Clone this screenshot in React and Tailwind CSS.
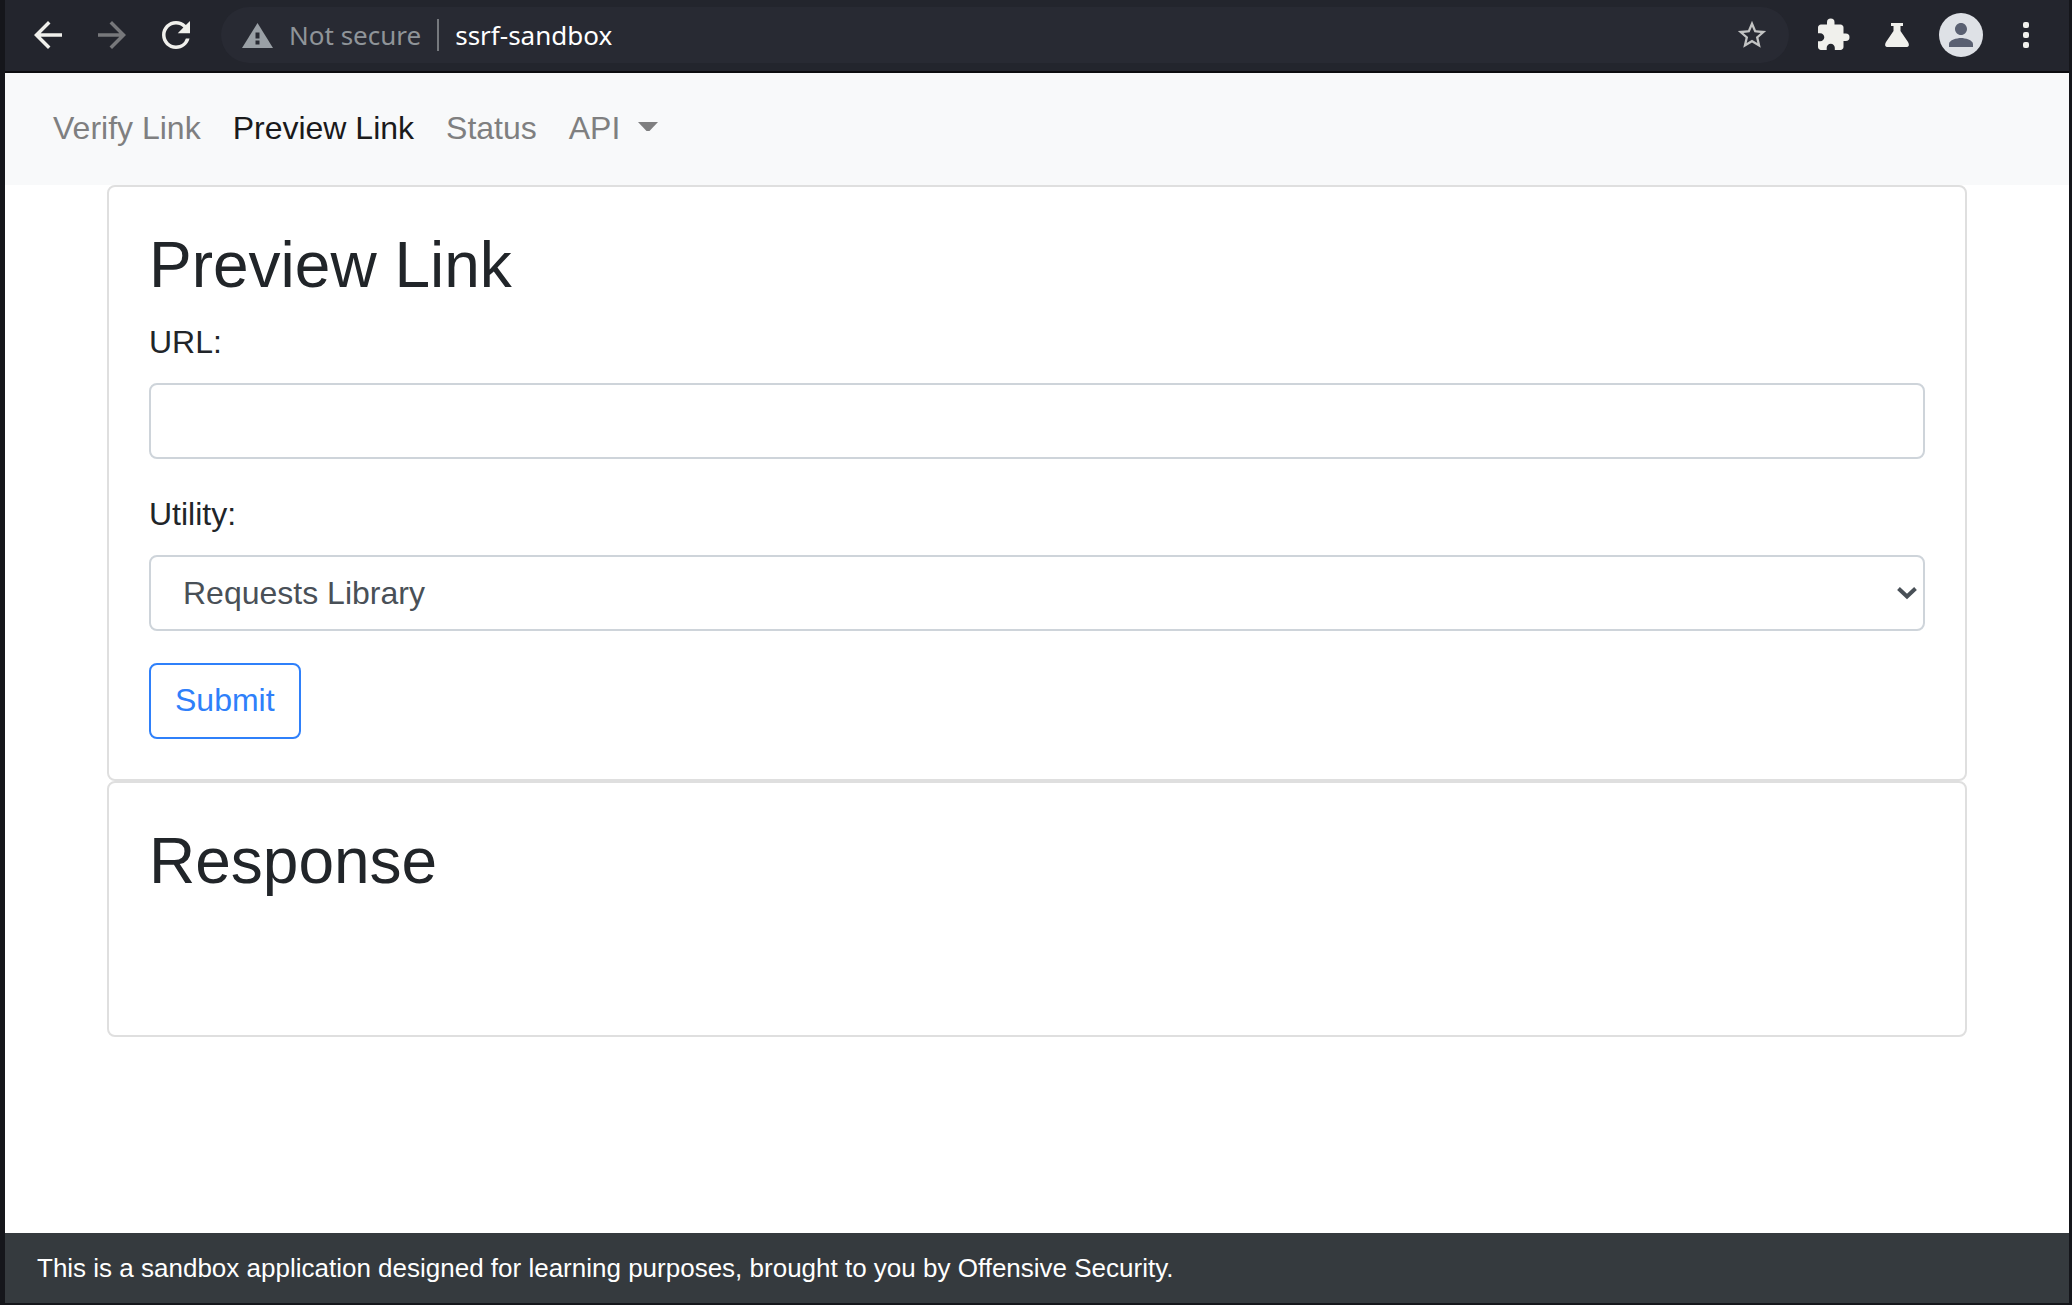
import React from 'react'
import { MdArrowBack, MdArrowForward, MdRefresh, MdStarBorder, MdExtension, MdPerson } from 'react-icons/md'
import { clsx } from 'clsx'

const links = [
  { label: 'Verify Link' },
  { label: 'Preview Link', active: true },
  { label: 'Status' },
]

const WarningIcon = () => (
  <svg width="31" height="25" viewBox="0 0 31 25">
    <path d="M15.5 0L31 25H0z" fill="#9aa0a6" />
    <path d="M13.5 9.5h4v6h-4zM13.5 17.5h4v4h-4z" fill="#282a33" />
  </svg>
)

const FlaskIcon = () => (
  <svg width="24" height="24" viewBox="0 0 24 24" fill="currentColor">
    <path d="M6 0h12v3h-2.500v5L23 19c1.500 2.500 1 5-1 5H2c-2 0-2.500-2.500-1-5L8.500 8V3H6z" />
  </svg>
)

const DotsIcon = () => (
  <svg width="6" height="26" viewBox="0 0 6 26" fill="currentColor">
    <rect width="6" height="6" rx="2" />
    <rect y="10" width="6" height="6" rx="2" />
    <rect y="20" width="6" height="6" rx="2" />
  </svg>
)

const Toolbar = () => (
  <header className="flex items-center h-[73px] pl-[22px] pr-10 pb-px bg-[#23252d] border-b-2 border-[#0c0c0f] text-[#f0f0ec] font-['Noto_Sans',sans-serif] text-[26px]">
    <div className="flex gap-[22px]">
      <button aria-label="Back"><MdArrowBack size={42} /></button>
      <button aria-label="Forward" className="text-[#77787b]"><MdArrowForward size={42} /></button>
      <button aria-label="Reload"><MdRefresh size={42} /></button>
    </div>

    <div className="flex flex-1 items-center h-14 ml-6 pl-[21px] pr-5 rounded-full bg-[#282a33]">
      <WarningIcon />
      <span className="ml-4 text-[#8f9499]">Not secure</span>
      <span className="w-0.5 h-8 ml-4 mr-4 bg-[#76797e]" />
      <input aria-label="Address" defaultValue="ssrf-sandbox" className="flex-1 min-w-0 bg-transparent text-white outline-none" />
      <button aria-label="Bookmark" className="text-[#c3c4c4]"><MdStarBorder size={34} /></button>
    </div>

    <div className="flex items-center ml-[26px]">
      <button aria-label="Extensions"><MdExtension size={36} /></button>
      <button aria-label="Labs" className="ml-[34px]"><FlaskIcon /></button>
      <button aria-label="Profile" className="flex items-center justify-center size-11 ml-[30px] rounded-full bg-[#dee1e6] text-[#5a6072]">
        <MdPerson size={36} />
      </button>
      <button aria-label="Menu" className="ml-10"><DotsIcon /></button>
    </div>
  </header>
)

const NavBar = () => (
  <nav className="flex items-center h-28 px-12 pb-0.5 gap-8 bg-[#f8f9fa]">
    {links.map(({ label, active }) => (
      <a key={label} href="#" className={clsx(active ? 'text-[#1a1a1b]' : 'text-[#7f7f80]')}>{label}</a>
    ))}
    <a href="#" className="flex items-center text-[#7f7f80]">
      API
      <svg width="20" height="9" viewBox="0 0 20 9" className="ml-[18px] mb-1" fill="currentColor">
        <path d="M0 0h20L11.500 9h-3z" />
      </svg>
    </a>
  </nav>
)

const Card = ({ title, className, children }) => (
  <section className={clsx('p-10 border-2 border-[#dfdfdf] rounded-lg bg-white', className)}>
    <h1 className="mb-4 text-[64px] leading-[76px]">{title}</h1>
    {children}
  </section>
)

const label = 'block mb-[18px] leading-[46px]'
const control = 'block w-full h-[76px] border-2 border-[#ced4da] rounded-lg bg-white text-[#495057]'

const App = () => (
  <div className="flex flex-col min-h-screen border-l-5 border-r-3 border-b-2 border-[#15161b] bg-white font-['Liberation_Sans',Arial,sans-serif] text-[32px] leading-[48px] text-[#212529]">
    <Toolbar />
    <NavBar />
    <main className="flex-1 px-[102px]">
      <Card title="Preview Link">
        <form onSubmit={e => e.preventDefault()}>
          <div className="mb-8">
            <label htmlFor="url" className={label}>URL:</label>
            <input id="url" type="text" className={clsx(control, 'px-6')} />
          </div>
          <div className="mb-8">
            <label htmlFor="utility" className={label}>Utility:</label>
            <div className="relative">
              <select id="utility" className={clsx(control, 'px-8 appearance-none')}>
                <option>Requests Library</option>
              </select>
              <svg width="20" height="13" viewBox="0 0 20 13" className="absolute right-2 inset-y-0 my-auto pointer-events-none" fill="none" stroke="#495057" strokeWidth="4">
                <path d="M1.500 1.500L10 9.500l8.500-8" />
              </svg>
            </div>
          </div>
          <button type="submit" className="block h-[76px] px-6 pb-0.5 border-2 border-[#2f80fa] rounded-lg text-[#2f80fa]">Submit</button>
        </form>
      </Card>
      <Card title="Response" className="min-h-64" />
    </main>
    <footer className="flex items-center h-[70px] px-8 bg-[#353a3e] text-[26px] text-white">
      This is a sandbox application designed for learning purposes, brought to you by Offensive Security.
    </footer>
  </div>
)

export default App
